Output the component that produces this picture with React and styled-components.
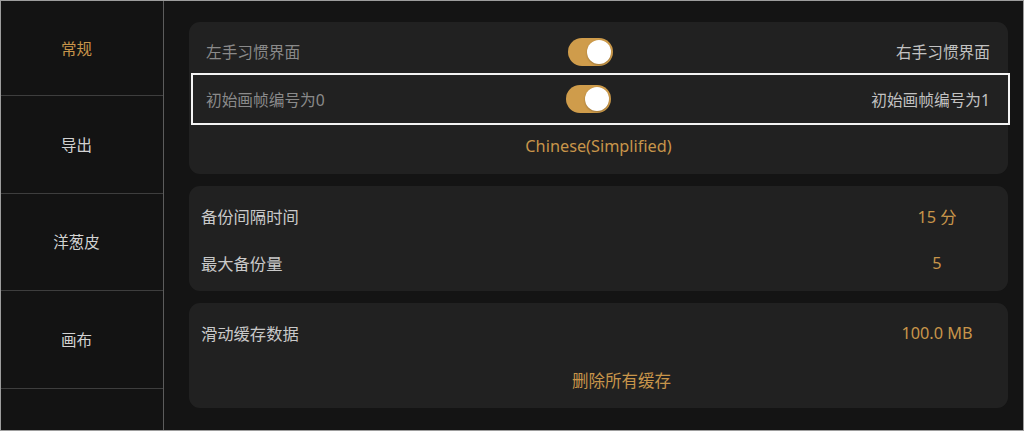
import React from 'react';
import styled, { createGlobalStyle } from 'styled-components';

const Global = createGlobalStyle`
  html, body {
    margin: 0;
    padding: 0;
    background: #141414;
  }
  * {
    box-sizing: border-box;
  }
`;

const gold = '#c8954a';

const Frame = styled.div`
  width: 1024px;
  height: 431px;
  border: 1px solid #9d9d9d;
  background: #141414;
  display: flex;
  font-family: "Noto Sans", "Noto Sans CJK SC", sans-serif;
  overflow: hidden;
`;

const Sidebar = styled.nav`
  width: 163px;
  flex: none;
  border-right: 1px solid #5c5c5c;
  background: #131313;
  display: flex;
  flex-direction: column;
`;

const NavItem = styled.div`
  height: 97.6px;
  flex: none;
  border-bottom: 1px solid #3e3e3e;
  display: flex;
  align-items: center;
  justify-content: center;
  padding-right: 11px;
  font-size: 15.5px;
  color: ${p => (p.$active ? gold : '#d2d2d2')};

  &:first-child {
    height: 95px;
  }
`;

const Main = styled.main`
  flex: 1;
  padding: 21px 15px 0 25px;
  display: flex;
  flex-direction: column;
  gap: 12px;
`;

const Card = styled.section`
  background: #212121;
  border-radius: 11px;
  padding: ${p => p.$pad || '6px 0 5px'};
  display: flex;
  flex-direction: column;
`;

const ToggleRow = styled.div`
  height: ${p => p.$h}px;
  display: grid;
  grid-template-columns: 1fr 45px 1fr;
  align-items: center;
  font-size: 15.7px;
  margin: ${p => (p.$focused ? '0 -2px 0 2px' : '0')};
  padding-left: ${p => (p.$focused ? '13px' : '17px')};
  padding-right: 18px;
  border: ${p => (p.$focused ? '2px solid #f4f4f4' : 'none')};
`;

const LeftLabel = styled.span`
  color: #8a8a8a;
`;

const RightLabel = styled.span`
  color: #c2c2c2;
  text-align: right;
`;

const Track = styled.div`
  width: 45px;
  height: 28px;
  border-radius: 14px;
  background: #cf9c4b;
  margin-left: ${p => (p.$focused ? '-10px' : '-8px')};
  display: flex;
  align-items: center;
  justify-content: flex-end;
  padding-right: 2px;
`;

const Knob = styled.div`
  width: 24px;
  height: 24px;
  border-radius: 50%;
  background: #ffffff;
  box-shadow: 0 1px 2px rgba(0, 0, 0, 0.25);
`;

const CenterLink = styled.div`
  height: ${p => p.$h}px;
  display: flex;
  align-items: center;
  justify-content: center;
  padding-left: ${p => p.$shift || 0}px;
  color: ${gold};
  font-size: ${p => p.$size || 16.3}px;
`;

const InfoRow = styled.div`
  height: 47px;
  display: grid;
  grid-template-columns: 1fr 120px;
  align-items: center;
  padding: 0 11px 0 12px;
  font-size: 16.3px;
`;

const InfoLabel = styled.span`
  color: #c9c9c9;
`;

const InfoValue = styled.span`
  color: ${gold};
  text-align: center;
`;

function Toggle({ focused }) {
  return (
    <Track $focused={focused}>
      <Knob />
    </Track>
  );
}

export default function App() {
  const nav = ['常规', '导出', '洋葱皮', '画布'];
  return (
    <>
      <Global />
      <Frame>
        <Sidebar>
          {nav.map((n, i) => (
            <NavItem key={n} $active={i === 0}>{n}</NavItem>
          ))}
        </Sidebar>
        <Main>
          <Card $pad="8px 0 8px">
            <ToggleRow $h={43}>
              <LeftLabel>左手习惯界面</LeftLabel>
              <Toggle />
              <RightLabel>右手习惯界面</RightLabel>
            </ToggleRow>
            <ToggleRow $h={52} $focused>
              <LeftLabel>初始画帧编号为0</LeftLabel>
              <Toggle focused />
              <RightLabel>初始画帧编号为1</RightLabel>
            </ToggleRow>
            <CenterLink $h={41}>Chinese(Simplified)</CenterLink>
          </Card>
          <Card>
            <InfoRow>
              <InfoLabel>备份间隔时间</InfoLabel>
              <InfoValue>15 分</InfoValue>
            </InfoRow>
            <InfoRow>
              <InfoLabel>最大备份量</InfoLabel>
              <InfoValue>5</InfoValue>
            </InfoRow>
          </Card>
          <Card>
            <InfoRow>
              <InfoLabel>滑动缓存数据</InfoLabel>
              <InfoValue>100.0 MB</InfoValue>
            </InfoRow>
            <CenterLink $h={47} $size={16.5} $shift={46}>删除所有缓存</CenterLink>
          </Card>
        </Main>
      </Frame>
    </>
  );
}
